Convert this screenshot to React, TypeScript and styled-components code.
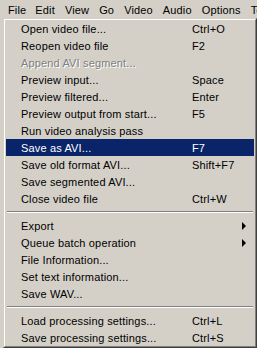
import styled, { createGlobalStyle } from "styled-components";

const GlobalStyle = createGlobalStyle`
  html, body {
    margin: 0;
    padding: 0;
    background: #d4d0c8;
    overflow: hidden;
  }
  body {
    font-family: "Liberation Sans", Arial, sans-serif;
    font-size: 11px;
    letter-spacing: 0.15px;
    color: #000;
  }
`;

type Entry =
  | { kind: "item"; label: string; shortcut?: string; disabled?: boolean; active?: boolean; submenu?: boolean }
  | { kind: "sep" };

const entries: Entry[] = [
  { kind: "item", label: "Open video file...", shortcut: "Ctrl+O" },
  { kind: "item", label: "Reopen video file", shortcut: "F2" },
  { kind: "item", label: "Append AVI segment...", disabled: true },
  { kind: "item", label: "Preview input...", shortcut: "Space" },
  { kind: "item", label: "Preview filtered...", shortcut: "Enter" },
  { kind: "item", label: "Preview output from start...", shortcut: "F5" },
  { kind: "item", label: "Run video analysis pass" },
  { kind: "item", label: "Save as AVI...", shortcut: "F7", active: true },
  { kind: "item", label: "Save old format AVI...", shortcut: "Shift+F7" },
  { kind: "item", label: "Save segmented AVI..." },
  { kind: "item", label: "Close video file", shortcut: "Ctrl+W" },
  { kind: "sep" },
  { kind: "item", label: "Export", submenu: true },
  { kind: "item", label: "Queue batch operation", submenu: true },
  { kind: "item", label: "File Information..." },
  { kind: "item", label: "Set text information..." },
  { kind: "item", label: "Save WAV..." },
  { kind: "sep" },
  { kind: "item", label: "Load processing settings...", shortcut: "Ctrl+L" },
  { kind: "item", label: "Save processing settings...", shortcut: "Ctrl+S" },
];

const menus = ["File", "Edit", "View", "Go", "Video", "Audio", "Options", "Tools"];

const Window = styled.div`
  width: 257px;
  height: 348px;
  display: flex;
  flex-direction: column;
`;

const MenuBar = styled.div`
  display: flex;
  height: 19px;
  padding-left: 3px;
  white-space: nowrap;
  overflow: hidden;
`;

const BarItem = styled.div<{ $open?: boolean }>`
  display: flex;
  align-items: center;
  flex-shrink: 0;
  box-sizing: border-box;
  height: 18px;
  margin-top: 1px;
  padding: ${(p) => (p.$open ? "0 4px 0 5px" : "0 4px")};
  border: 1px solid ${(p) => (p.$open ? "#808080 #fff #fff #808080" : "transparent")};
`;

const Popup = styled.div`
  box-sizing: border-box;
  margin-left: 3px;
  width: 254px;
  flex: 1;
  border-style: solid;
  border-width: 1px;
  border-color: #d4d0c8 #404040 #404040 #d4d0c8;
`;

const PopupInner = styled.div`
  height: 100%;
  box-sizing: border-box;
  border-style: solid;
  border-width: 1px;
  border-color: #fff #808080 #808080 #fff;
  padding: 0 1px;
  display: flex;
  flex-direction: column;
`;

const Item = styled.div<{ $active?: boolean; $disabled?: boolean }>`
  display: grid;
  grid-template-columns: 171px 1fr 12px;
  align-items: center;
  height: 17px;
  flex-shrink: 0;
  padding-left: 15px;
  white-space: nowrap;
  background: ${(p) => (p.$active ? "#0a246a" : "transparent")};
  color: ${(p) => (p.$active ? "#fff" : p.$disabled ? "#808080" : "#000")};
  text-shadow: ${(p) => (p.$disabled ? "1px 1px 0 #fff" : "none")};
`;

const Arrow = styled.span`
  width: 0;
  height: 0;
  border-top: 4px solid transparent;
  border-bottom: 4px solid transparent;
  border-left: 4px solid #000;
`;

const Separator = styled.div`
  height: 10px;
  flex-shrink: 0;
  display: flex;
  flex-direction: column;
  justify-content: center;
  padding: 0 1px;

  &::before {
    content: "";
    display: block;
    border-top: 1px solid #808080;
    border-bottom: 1px solid #fff;
  }
`;

export default function App() {
  return (
    <>
      <GlobalStyle />
      <Window>
        <MenuBar>
          {menus.map((m) => (
            <BarItem key={m} $open={m === "File"}>
              {m}
            </BarItem>
          ))}
        </MenuBar>
        <Popup>
          <PopupInner>
            {entries.map((e, i) =>
              e.kind === "sep" ? (
                <Separator key={i} />
              ) : (
                <Item key={i} $active={e.active} $disabled={e.disabled}>
                  <span>{e.label}</span>
                  <span>{e.shortcut}</span>
                  {e.submenu ? <Arrow /> : <span />}
                </Item>
              )
            )}
          </PopupInner>
        </Popup>
      </Window>
    </>
  );
}
